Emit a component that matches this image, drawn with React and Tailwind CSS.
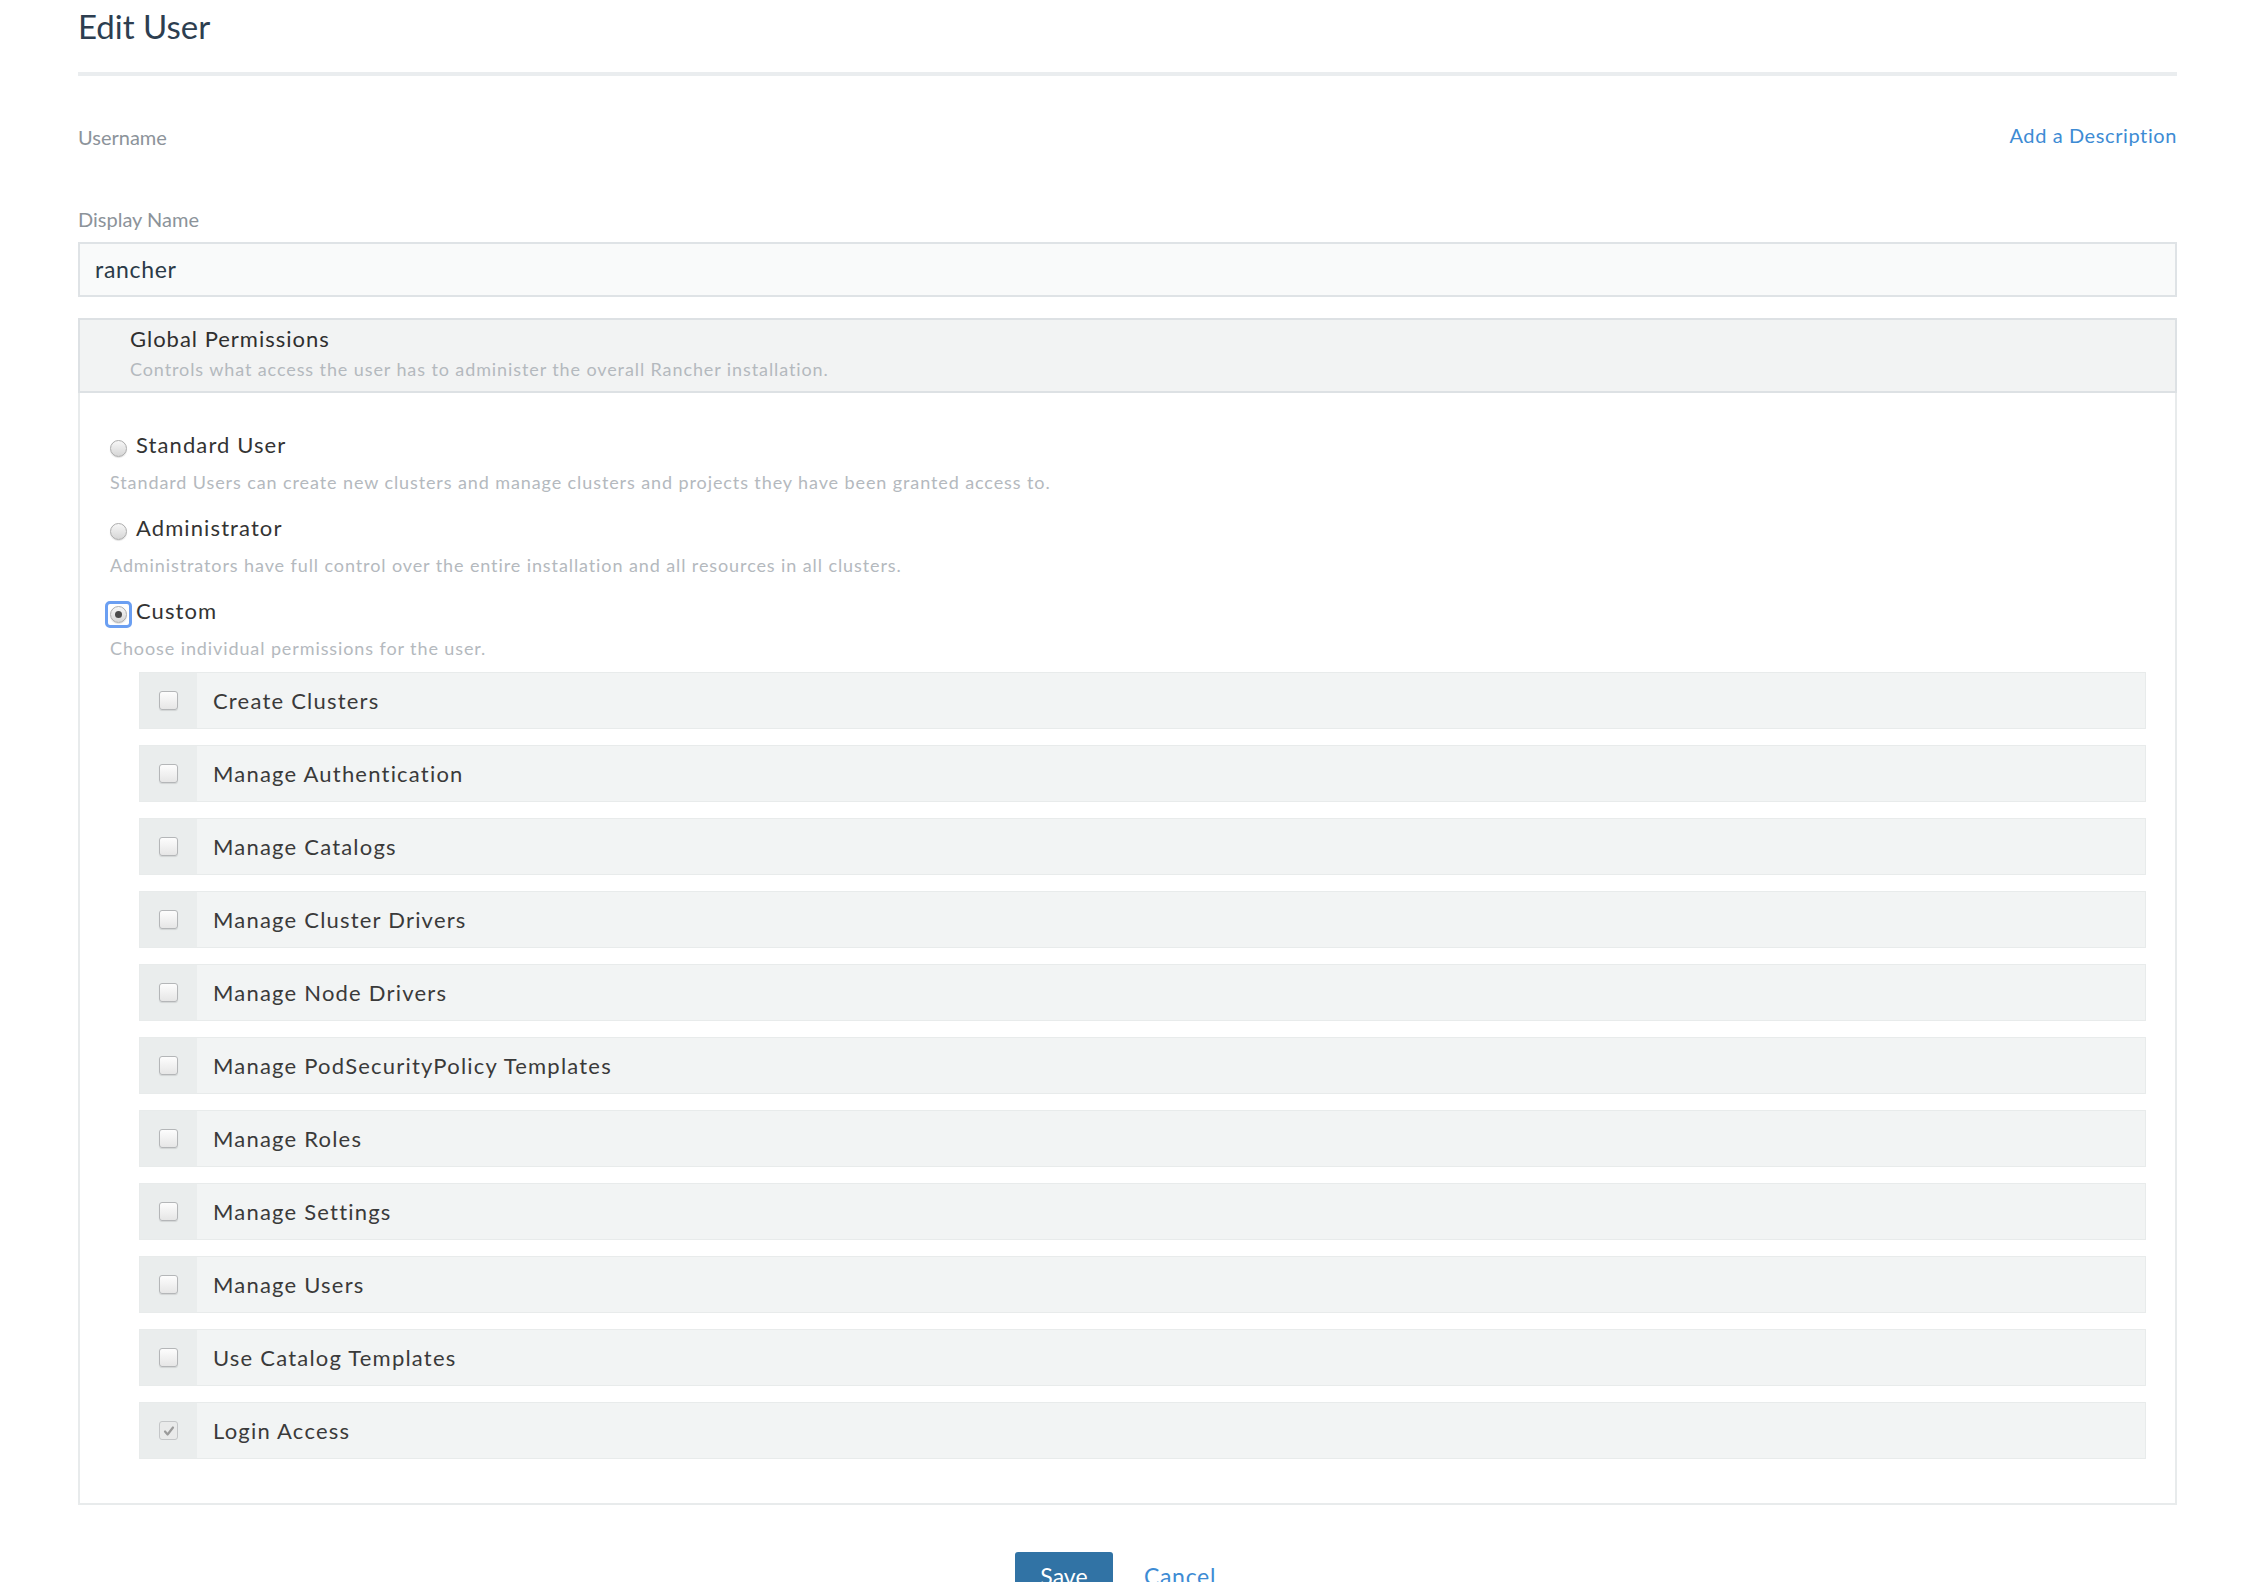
import React from 'react';

const permissions = [
  'Create Clusters',
  'Manage Authentication',
  'Manage Catalogs',
  'Manage Cluster Drivers',
  'Manage Node Drivers',
  'Manage PodSecurityPolicy Templates',
  'Manage Roles',
  'Manage Settings',
  'Manage Users',
  'Use Catalog Templates',
  'Login Access',
];

const roles = [
  {
    label: 'Standard User',
    description: 'Standard Users can create new clusters and manage clusters and projects they have been granted access to.',
  },
  {
    label: 'Administrator',
    description: 'Administrators have full control over the entire installation and all resources in all clusters.',
  },
  {
    label: 'Custom',
    description: 'Choose individual permissions for the user.',
    selected: true,
  },
];

function Radio({ selected }) {
  return (
    <span className="relative mt-[8px] flex h-[17px] w-[17px] shrink-0 items-center justify-center rounded-full border border-[#acacac] bg-linear-to-b from-[#f7f7f7] to-[#d6d6d6] shadow-[0_1px_1px_rgba(0,0,0,0.12)]">
      {selected && <span className="h-[7px] w-[7px] rounded-full bg-[#4a4a4a]" />}
      {/* focus ring */}
      {selected && (
        <span className="absolute -inset-[6px] rounded-[5px] border-[3px] border-[#6b9ff2]" />
      )}
    </span>
  );
}

function Checkbox({ checked }) {
  if (checked) {
    return (
      <span className="flex h-[19px] w-[19px] items-center justify-center rounded-[3px] border border-[#c4c6c8] bg-[#e9eaea]">
        <svg width="12" height="12" viewBox="0 0 12 12">
          <path d="M2 6.5 L4.6 9.5 L10 2.5" fill="none" stroke="#9b9b9b" strokeWidth="2.2" strokeLinecap="round" strokeLinejoin="round" />
        </svg>
      </span>
    );
  }
  return (
    <span className="h-[19px] w-[19px] rounded-[3px] border border-[#b4b6b8] bg-linear-to-b from-[#fdfdfd] to-[#e6e6e6] shadow-[0_1px_1px_rgba(0,0,0,0.1)]" />
  );
}

export default function App() {
  return (
    <div className="min-h-screen bg-white pl-[78px] pr-[67px] pt-[6px] font-[Lato,sans-serif]">
      {/* Header */}
      <h1 className="text-[33px] leading-[40px] font-normal text-[#2d3e50]">Edit User</h1>
      <div className="mt-[26px] h-[4px] bg-[#eaedef]" />

      <div className="mt-[47px] flex items-start justify-between">
        <div className="pt-[2px] text-[20px] leading-[24px] text-[#8c939a]">Username</div>
        <a className="text-[20px] leading-[24px] tracking-[0.03em] text-[#3d8bd4]" href="#">
          Add a Description
        </a>
      </div>

      <div className="mt-[58px] text-[20px] leading-[24px] text-[#8c939a]">Display Name</div>
      <div className="mt-[11px] flex h-[55px] items-center border-2 border-[#dfe3e6] bg-[#f9fafa] px-[15px] text-[23px] tracking-[0.03em] text-[#2b3a48]">
        rancher
      </div>

      {/* Global permissions */}
      <div className="mt-[21px] flex flex-col">
        <div className="border-2 border-[#dde1e4] bg-[#f2f3f3] pt-[6px] pb-[11px] pl-[50px]">
          <div className="text-[22px] leading-[26px] tracking-[0.045em] text-[#2f2f2f]">Global Permissions</div>
          <div className="mt-[6px] text-[18px] leading-[22px] tracking-[0.05em] text-[#b4b9be]">
            Controls what access the user has to administer the overall Rancher installation.
          </div>
        </div>

        <div className="border-2 border-t-0 border-[#e8ebec] pt-[39px] pr-[29px] pb-[44px] pl-[30px]">
          {roles.map((role, i) => (
            <div key={role.label} className={i === 0 ? '' : 'mt-[22px]'}>
              <div className="flex items-start gap-[9px]">
                <Radio selected={role.selected} />
                <span className="text-[22px] leading-[26px] tracking-[0.05em] text-[#333]">{role.label}</span>
              </div>
              <div className="mt-[13px] text-[18px] leading-[22px] tracking-[0.05em] text-[#b4b9be]">{role.description}</div>
            </div>
          ))}

          <div className="mt-[13px] ml-[29px] flex flex-col gap-[16px]">
            {permissions.map((p) => (
              <div key={p} className="flex h-[57px] border border-[#e8ebeb] bg-[#f2f4f4]">
                <div className="flex w-[57px] items-center justify-center bg-[#eaeded]">
                  <Checkbox checked={p === 'Login Access'} />
                </div>
                <div className="flex items-center pl-[16px] text-[22px] tracking-[0.055em] text-[#3a3a3a]">{p}</div>
              </div>
            ))}
          </div>
        </div>
      </div>

      {/* Footer */}
      <div className="mt-[47px] flex justify-center gap-[7px]">
        <button className="h-[48px] w-[98px] rounded-[3px] bg-[#3173a5] text-[23px] text-white">Save</button>
        <button className="h-[48px] px-[24px] text-[23px] tracking-[0.03em] text-[#3d8bd4]">Cancel</button>
      </div>
    </div>
  );
}
